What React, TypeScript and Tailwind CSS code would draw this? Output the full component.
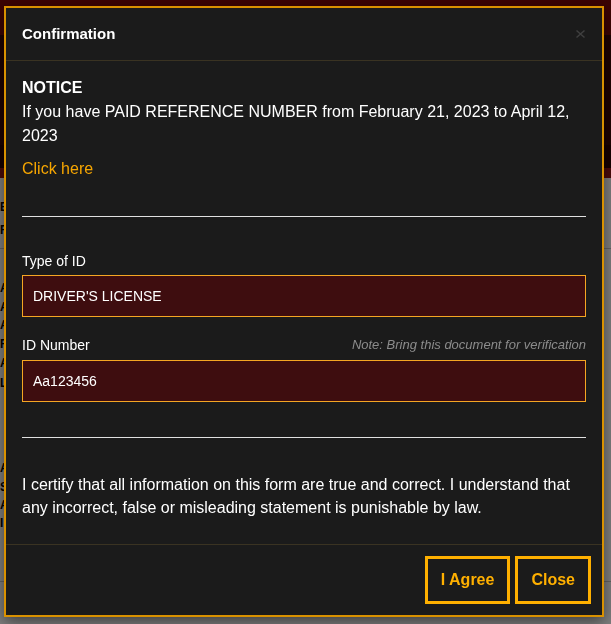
import React from "react";

const BG_ROWS = [
  { top: 200, text: "E" },
  { top: 223, text: "F" },
  { top: 281, text: "A" },
  { top: 300, text: "A" },
  { top: 318, text: "A" },
  { top: 337, text: "F" },
  { top: 356, text: "A" },
  { top: 376, text: "L" },
  { top: 461, text: "A" },
  { top: 480, text: "S" },
  { top: 498, text: "A" },
  { top: 516, text: "I" },
];

function Field({ label, value, note, gap }: { label: string; value: string; note?: string; gap: string }) {
  return (
    <div>
      <div className={`flex items-center justify-between ${gap}`}>
        <span className="text-[14px] leading-[20px] text-white">{label}</span>
        {note && <span className="text-[13px] leading-[20px] italic text-[#8c8c8c]">{note}</span>}
      </div>
      <div className="h-[42px] flex items-center px-[10px] bg-[#3e0d0f] border border-[#f5a623] text-[14px] text-white">
        {value}
      </div>
    </div>
  );
}

export default function App() {
  return (
    <div className="relative h-[624px] w-[611px] overflow-hidden bg-white font-['Liberation_Sans',Arial,sans-serif]">
      {/* Page behind the modal */}
      <div className="h-[35px] bg-[#780808]" />
      <div className="h-[110px] bg-[#3a0505]" />
      <div className="h-[23px] bg-[#2c0000]" />
      <div className="h-[10px] bg-[#961616]" />
      <div className="relative w-[4px] overflow-hidden h-[446px]">
        {BG_ROWS.map((r) => (
          <div
            key={r.top}
            className="absolute left-[0px] text-[12px] leading-[14px] font-bold text-black"
            style={{ top: r.top - 178 }}
          >
            {r.text}
          </div>
        ))}
      </div>
      <div className="absolute left-0 right-0 top-[248px] h-px bg-[#c8c8c8]" />
      <div className="absolute left-0 right-0 top-[581px] h-px bg-[#c8c8c8]" />

      {/* Backdrop + modal */}
      <div className="fixed inset-0 bg-black/50">
        <div className="ml-[4px] mt-[6px] w-[600px] h-[611px] flex flex-col bg-[#1b1b1b] border-2 border-[#d99100] shadow-[0_5px_15px_rgba(0,0,0,0.5)]">
          {/* Header */}
          <div className="flex items-center justify-between px-[16px] py-[16px] border-b border-[#3a3322]">
            <h4 className="text-[15px] leading-[20px] font-bold text-white">Confirmation</h4>
            <svg width="11" height="10" viewBox="0 0 11 10" aria-hidden="true">
              <path d="M1.5 1.5L9.5 8.5M9.5 1.5L1.5 8.5" stroke="#3f3f3f" strokeWidth="1.5" />
            </svg>
          </div>

          {/* Body */}
          <div className="flex-1 px-[16px] pt-[15px] text-white">
            <div className="text-[16px] leading-[24px] font-bold">NOTICE</div>
            <p className="text-[16px] leading-[24px]">
              If you have PAID REFERENCE NUMBER from February 21, 2023 to April 12, 2023
            </p>
            <a className="block mt-[9px] text-[16px] leading-[24px] text-[#f7a600]">Click here</a>

            <hr className="mt-[35px] border-t border-[#e0e0e0]" />

            <div className="mt-[34px] flex flex-col gap-[18px]">
              <Field label="Type of ID" value="DRIVER'S LICENSE" gap="mb-[4px]" />
              <Field
                label="ID Number"
                value="Aa123456"
                note="Note: Bring this document for verification"
                gap="mb-[5px]"
              />
            </div>

            <hr className="mt-[35px] border-t border-[#e0e0e0]" />

            <p className="mt-[35px] text-[16px] leading-[23px]">
              I certify that all information on this form are true and correct. I understand that any incorrect,
              false or misleading statement is punishable by law.
            </p>
          </div>

          {/* Footer */}
          <div className="flex justify-end gap-[5px] px-[11px] pt-[11px] pb-[11px] border-t border-[#3a3322]">
            <button className="h-[48px] px-[13px] border-[3px] border-[#ffb000] text-[16px] font-bold text-[#ffb000]">
              I Agree
            </button>
            <button className="h-[48px] px-[13px] border-[3px] border-[#ffb000] text-[16px] font-bold text-[#ffb000]">
              Close
            </button>
          </div>
        </div>
      </div>
    </div>
  );
}
